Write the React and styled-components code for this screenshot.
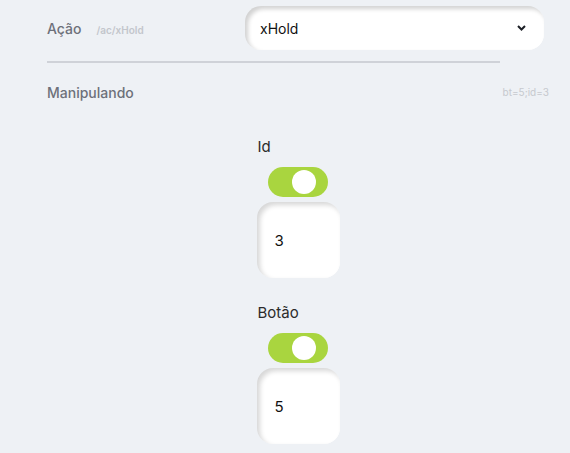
import React from "react";
import styled, { createGlobalStyle } from "styled-components";

const GlobalStyle = createGlobalStyle`
  html, body {
    margin: 0;
    padding: 0;
    background: #eef1f5;
    font-family: Inter, "Noto Sans", sans-serif;
  }
`;

const Page = styled.div`
  width: 502px;
  padding: 6px 21px 0 47px;
  min-height: 453px;
  box-sizing: content-box;
  background: #eef1f5;
`;

const ActionRow = styled.div`
  display: flex;
  align-items: center;
  justify-content: space-between;
`;

const LabelGroup = styled.div`
  display: flex;
  align-items: baseline;
  gap: 15px;
`;

const FieldLabel = styled.span`
  font-size: 14px;
  font-weight: 500;
  color: #6d707a;
`;

const Hint = styled.span`
  font-size: 10px;
  font-weight: 600;
  color: #c3c6cc;
`;

const SelectBox = styled.div`
  width: 299px;
  height: 44px;
  margin-right: 5px;
  box-sizing: border-box;
  padding: 0 18px 0 15px;
  display: flex;
  align-items: center;
  justify-content: space-between;
  background: #fff;
  border-radius: 16px;
  box-shadow: inset 3px 3px 4px rgba(0, 0, 0, 0.18),
    inset -2px -2px 4px rgba(255, 255, 255, 0.9);
  font-size: 14px;
  color: #111;
`;

const Divider = styled.hr`
  width: 453px;
  margin: 11px 0 0;
  border: none;
  height: 2px;
  background: #cfd2d8;
`;

const SectionRow = styled.div`
  display: flex;
  align-items: center;
  justify-content: space-between;
  margin-top: 19px;
  height: 20px;
`;

const Code = styled.span`
  font-size: 10px;
  color: #c6c9ce;
`;

const Fields = styled.div`
  display: flex;
  flex-direction: column;
  align-items: center;
  margin-top: 35px;
  gap: 25px;
`;

const Field = styled.div`
  width: 83px;
  display: flex;
  flex-direction: column;
`;

const Name = styled.div`
  font-size: 15px;
  line-height: 20px;
  color: #2b2b2b;
  margin-left: 1px;
`;

const Toggle = styled.div`
  align-self: center;
  width: 60px;
  height: 30px;
  margin: 10px 0 5px;
  border-radius: 15px;
  background: ${(p) => (p.$on ? "#a9d53f" : "#c9ccd2")};
  display: flex;
  align-items: center;
  justify-content: ${(p) => (p.$on ? "flex-end" : "flex-start")};
  padding: 0 12px;
  box-sizing: border-box;
`;

const Knob = styled.div`
  width: 24px;
  height: 24px;
  border-radius: 50%;
  background: #fff;
`;

const ValueBox = styled.div`
  width: 83px;
  height: 76px;
  box-sizing: border-box;
  padding-left: 18px;
  display: flex;
  align-items: center;
  background: #fff;
  border-radius: 16px;
  box-shadow: inset 3px 3px 5px rgba(0, 0, 0, 0.16),
    inset -2px -2px 4px rgba(255, 255, 255, 0.9);
  font-size: 15px;
  color: #111;
`;

const Chevron = () => (
  <svg width="9" height="6" viewBox="0 0 9 6">
    <path d="M1 1l3.5 3.5L8 1" fill="none" stroke="#1c1f26" strokeWidth="2" />
  </svg>
);

const fields = [
  { name: "Id", value: "3" },
  { name: "Botão", value: "5" },
];

export default function App() {
  return (
    <>
      <GlobalStyle />
      <Page>
        <ActionRow>
          <LabelGroup>
            <FieldLabel>Ação</FieldLabel>
            <Hint>/ac/xHold</Hint>
          </LabelGroup>
          <SelectBox>
            <span>xHold</span>
            <Chevron />
          </SelectBox>
        </ActionRow>
        <Divider />
        <SectionRow>
          <FieldLabel>Manipulando</FieldLabel>
          <Code>bt=5;id=3</Code>
        </SectionRow>
        <Fields>
          {fields.map((f) => (
            <Field key={f.name}>
              <Name>{f.name}</Name>
              <Toggle $on>
                <Knob />
              </Toggle>
              <ValueBox>{f.value}</ValueBox>
            </Field>
          ))}
        </Fields>
      </Page>
    </>
  );
}
